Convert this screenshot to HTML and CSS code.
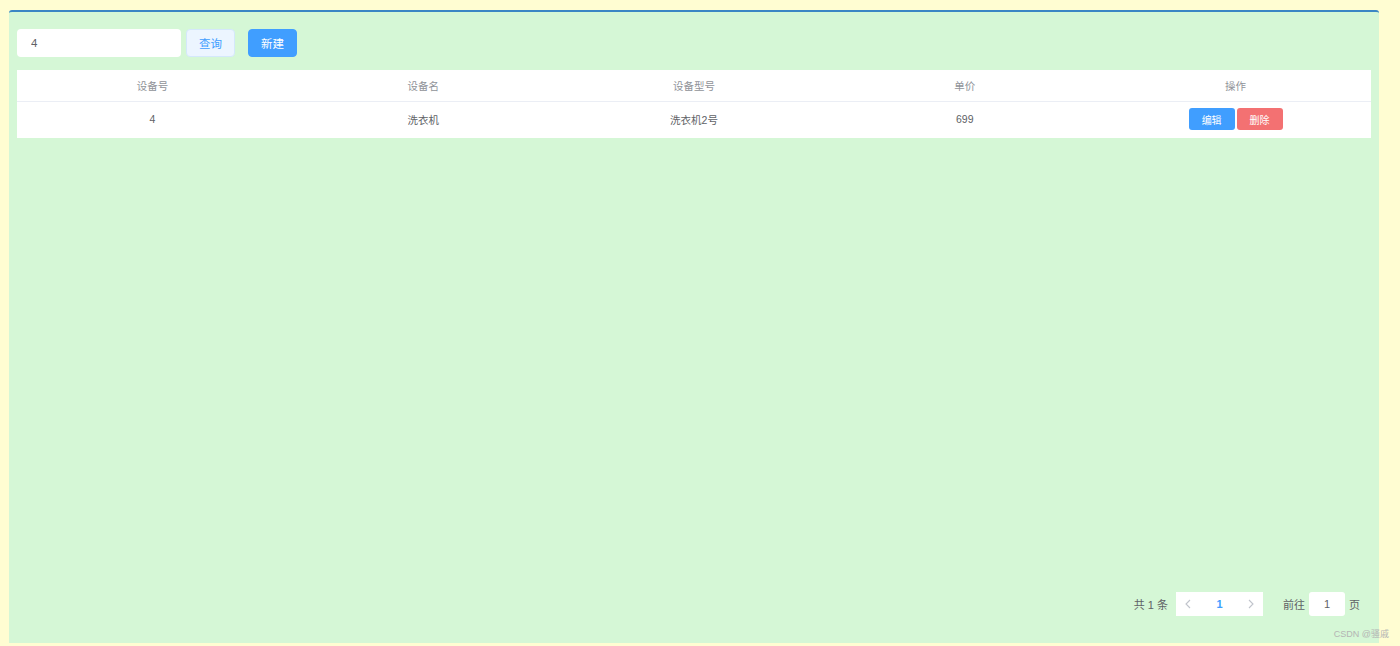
FILE: index.html
```html
<!DOCTYPE html>
<html>
<head>
    <title>设备管理</title>
    <meta charset="UTF-8">
    <meta name="viewport" content="width=device-width, initial-scale=1.0">
    <link rel="stylesheet" href="styles.css">
</head>
<body>
    <div class="panel">
        <div class="toolbar">
            <input type="text" class="search-input" value="4">
            <button type="button" class="btn btn-plain">查询</button>
            <button type="button" class="btn btn-primary btn-new">新建</button>
        </div>

        <table class="device-table">
            <thead>
                <tr>
                    <th>设备号</th>
                    <th>设备名</th>
                    <th>设备型号</th>
                    <th>单价</th>
                    <th>操作</th>
                </tr>
            </thead>
            <tbody>
                <tr>
                    <td>4</td>
                    <td>洗衣机</td>
                    <td>洗衣机2号</td>
                    <td>699</td>
                    <td>
                        <button type="button" class="btn-mini btn-edit">编辑</button>
                        <button type="button" class="btn-mini btn-delete">删除</button>
                    </td>
                </tr>
            </tbody>
        </table>

        <div class="spacer"></div>

        <div class="pagination">
            <span class="total">共 1 条</span>
            <div class="pager">
                <svg class="arrow" width="6" height="10" viewBox="0 0 6 10">
                    <path d="M5 1 L1 5 L5 9" fill="none" stroke="#c0c4cc" stroke-width="1.1"/>
                </svg>
                <span class="page-num">1</span>
                <svg class="arrow" width="6" height="10" viewBox="0 0 6 10">
                    <path d="M1 1 L5 5 L1 9" fill="none" stroke="#c0c4cc" stroke-width="1.1"/>
                </svg>
            </div>
            <span class="jump">前往</span>
            <input type="text" class="jump-input" value="1">
            <span class="jump-suffix">页</span>
        </div>
    </div>

    <div class="watermark">CSDN @骚戚</div>
</body>
</html>
```

FILE: styles.css
```css
html, body {
    margin: 0;
    height: 100%;
}

body {
    font-family: "Liberation Sans", "Noto Sans CJK SC", sans-serif;
    background-color: #fffdd2;
    padding: 10px 21px 3px 9px;
    box-sizing: border-box;
    position: relative;
}

.panel {
    height: 100%;
    background-color: #d5f7d6;
    border-top: 2px solid #3a86c4;
    border-radius: 3px 3px 0 0;
    padding: 17px 8px 0 8px;
    box-sizing: border-box;
    display: flex;
    flex-direction: column;
}

.toolbar {
    display: flex;
    align-items: center;
    height: 28px;
    margin-bottom: 13px;
}

.search-input {
    width: 164px;
    height: 28px;
    border: none;
    border-radius: 4px;
    padding: 0 14px;
    box-sizing: border-box;
    font-family: inherit;
    font-size: 11.5px;
    color: #606266;
    background-color: #fff;
    outline: none;
}

.btn {
    height: 28px;
    width: 49px;
    border-radius: 4px;
    font-family: inherit;
    font-size: 11.5px;
    cursor: pointer;
    padding: 0;
}

.btn-plain {
    margin-left: 5px;
    background-color: #ecf5ff;
    color: #409eff;
    border: 1px solid #d4e8fb;
}

.btn-primary {
    background-color: #409eff;
    color: #fff;
    border: 1px solid #409eff;
}

.btn-new {
    margin-left: 13px;
}

.device-table {
    width: 100%;
    border-collapse: collapse;
    table-layout: fixed;
    background-color: #fff;
    font-size: 10.5px;
}

.device-table th {
    height: 31px;
    padding: 0;
    color: #909399;
    font-weight: normal;
    text-align: center;
    border-bottom: 1px solid #ebeef5;
}

.device-table td {
    height: 34px;
    padding: 0 0 2px 0;
    color: #606266;
    text-align: center;
}

.btn-mini {
    height: 22px;
    width: 46px;
    border: none;
    border-radius: 3px;
    color: #fff;
    font-family: inherit;
    font-size: 10px;
    cursor: pointer;
    padding: 0;
    vertical-align: middle;
}

.btn-edit {
    background-color: #409eff;
}

.btn-delete {
    background-color: #f37172;
    margin-left: -1px;
}

.spacer {
    flex: 1;
}

.pagination {
    display: flex;
    justify-content: flex-end;
    align-items: center;
    height: 24px;
    margin-bottom: 27px;
    padding-right: 11px;
    font-size: 11px;
    color: #606266;
}

.total {
    margin-right: 8px;
}

.pager {
    display: flex;
    align-items: center;
    justify-content: space-between;
    width: 87px;
    height: 24px;
    background-color: #fff;
    padding: 0 9px 0 9px;
    box-sizing: border-box;
}

.page-num {
    color: #409eff;
    font-weight: bold;
}

.jump {
    margin-left: 20px;
}

.jump-input {
    width: 36px;
    height: 24px;
    margin: 0 4px;
    padding: 0;
    border: none;
    border-radius: 3px;
    box-sizing: border-box;
    text-align: center;
    font-family: inherit;
    font-size: 11px;
    color: #606266;
    outline: none;
}

.watermark {
    position: absolute;
    right: 11px;
    bottom: 6px;
    font-size: 9px;
    color: #b4b4b4;
}
```
